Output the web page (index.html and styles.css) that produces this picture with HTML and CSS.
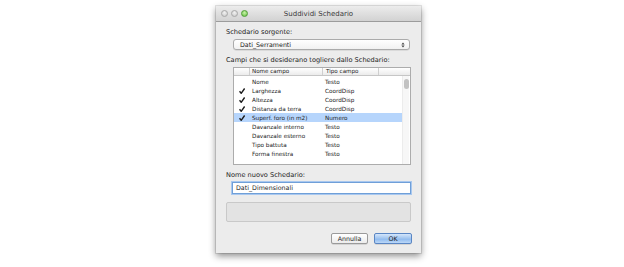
FILE: index.html
```html
<!DOCTYPE html>
<html>
<head>
<meta charset="utf-8">
<link rel="stylesheet" href="styles.css">
</head>
<body>
<div class="stage">
  <div class="window">
    <div class="titlebar">
      <div class="lights">
        <span class="light"></span>
        <span class="light"></span>
        <span class="light green"></span>
      </div>
      <div class="title">Suddividi Schedario</div>
      <div></div>
    </div>
    <div class="content">
      <div class="label">Schedario sorgente:</div>
      <div class="popup">
        <span>Dati_Serramenti</span>
        <svg class="arrows" width="4" height="6" viewBox="0 0 4 6"><path d="M0.4 2.4 L2 0.6 L3.6 2.4Z M0.4 3.6 L2 5.4 L3.6 3.6Z" fill="#444"/></svg>
      </div>
      <div class="label">Campi che si desiderano togliere dallo Schedario:</div>
      <div class="table">
        <div class="thead">
          <div class="th th-check"></div>
          <div class="th th-name">Nome campo</div>
          <div class="th th-type">Tipo campo</div>
          <div class="th th-rest"></div>
        </div>
        <div class="tbody">
          <div class="rows">
            <div class="row"><span class="chk"></span><span class="nm">Nome</span><span class="tp">Testo</span></div>
            <div class="row"><span class="chk"><svg width="6" height="6" viewBox="0 0 6 6"><path d="M0.5 3.3 L2.2 5.3 L5.6 0.5" fill="none" stroke="#1a1a1a" stroke-width="1.4"/></svg></span><span class="nm">Larghezza</span><span class="tp">CoordDisp</span></div>
            <div class="row"><span class="chk"><svg width="6" height="6" viewBox="0 0 6 6"><path d="M0.5 3.3 L2.2 5.3 L5.6 0.5" fill="none" stroke="#1a1a1a" stroke-width="1.4"/></svg></span><span class="nm">Altezza</span><span class="tp">CoordDisp</span></div>
            <div class="row"><span class="chk"><svg width="6" height="6" viewBox="0 0 6 6"><path d="M0.5 3.3 L2.2 5.3 L5.6 0.5" fill="none" stroke="#1a1a1a" stroke-width="1.4"/></svg></span><span class="nm">Distanza da terra</span><span class="tp">CoordDisp</span></div>
            <div class="row selected"><span class="chk"><svg width="6" height="6" viewBox="0 0 6 6"><path d="M0.5 3.3 L2.2 5.3 L5.6 0.5" fill="none" stroke="#1a1a1a" stroke-width="1.4"/></svg></span><span class="nm">Superf. foro (in m2)</span><span class="tp">Numero</span></div>
            <div class="row"><span class="chk"></span><span class="nm">Davanzale interno</span><span class="tp">Testo</span></div>
            <div class="row"><span class="chk"></span><span class="nm">Davanzale esterno</span><span class="tp">Testo</span></div>
            <div class="row"><span class="chk"></span><span class="nm">Tipo battuta</span><span class="tp">Testo</span></div>
            <div class="row"><span class="chk"></span><span class="nm">Forma finestra</span><span class="tp">Testo</span></div>
          </div>
          <div class="scrollbar"><div class="thumb"></div></div>
        </div>
      </div>
      <div class="label">Nome nuovo Schedario:</div>
      <div class="input">Dati_Dimensionali</div>
      <div class="panel"></div>
      <div class="buttons">
        <div class="btn">Annulla</div>
        <div class="btn default">OK</div>
      </div>
    </div>
  </div>
</div>
</body>
</html>
```

FILE: styles.css
```css
html, body {
  margin: 0;
  padding: 0;
  background: #ffffff;
}
body {
  width: 624px;
  height: 267px;
  overflow: hidden;
  font-family: "DejaVu Sans", "Liberation Sans", sans-serif;
  color: #222222;
}
.stage {
  padding: 6px 0 0 216px;
}
.window {
  width: 205px;
  height: 247px;
  background: #ececec;
  box-shadow: 0 3px 7px rgba(0,0,0,0.45), 0 0 0 1px rgba(0,0,0,0.1);
  display: flex;
  flex-direction: column;
}
.titlebar {
  height: 15px;
  border-bottom: 1px solid #9c9c9c;
  background: linear-gradient(#ececec, #d2d2d2);
  display: grid;
  grid-template-columns: 1fr auto 1fr;
  align-items: center;
}
.lights {
  display: flex;
  gap: 3px;
  padding-left: 5px;
}
.light {
  width: 5px;
  height: 5px;
  border-radius: 50%;
  background: radial-gradient(circle at 50% 35%, #f2f2f2, #c6c6c6);
  border: 1px solid #a8a8a8;
}
.light.green {
  background: radial-gradient(circle at 50% 35%, #c9f2a8, #62c040);
  border-color: #519d37;
}
.title {
  font-size: 7px;
  color: #3a3a3a;
  line-height: 10px;
}
.content {
  display: flex;
  flex-direction: column;
  padding: 0 10px;
}
.label {
  font-size: 6.6px;
  line-height: 10px;
  height: 10px;
  margin-top: 5px;
  white-space: nowrap;
}
.popup {
  margin: 2px 1px 0 7px;
  height: 9px;
  border: 1px solid #ababab;
  border-radius: 3px;
  background: linear-gradient(#ffffff, #f2f2f2);
  display: flex;
  align-items: center;
  justify-content: space-between;
  padding: 0 4px 0 6px;
  font-size: 6.3px;
  box-shadow: 0 0.5px 0.5px rgba(0,0,0,0.15);
}
.arrows { display: block; }
.table {
  margin: 2px 0 0 7px;
  height: 96px;
  border: 1px solid #acacac;
  background: #ffffff;
  display: flex;
  flex-direction: column;
}
.thead {
  height: 7px;
  border-bottom: 1px solid #c6c6c6;
  background: linear-gradient(#ffffff, #ebebeb);
  display: flex;
  font-size: 5.6px;
  line-height: 7px;
}
.th {
  border-right: 1px solid #cfcfcf;
  white-space: nowrap;
  overflow: hidden;
}
.th-check { width: 15px; }
.th-name { width: 70px; padding-left: 2px; }
.th-type { width: 52px; padding-left: 3px; }
.th-rest { flex: 1; border-right: none; }
.tbody {
  flex: 1;
  display: flex;
}
.rows {
  flex: 1;
  padding-top: 1px;
  display: flex;
  flex-direction: column;
}
.row {
  height: 9px;
  display: flex;
  align-items: center;
  font-size: 5.7px;
  white-space: nowrap;
}
.row.selected { background: #b6d5fc; }
.chk {
  width: 15px;
  display: flex;
  justify-content: center;
  padding-left: 1px;
  box-sizing: border-box;
}
.chk svg { display: block; }
.nm { width: 73px; padding-left: 3px; box-sizing: border-box; }
.tp { padding-left: 3px; }
.scrollbar {
  width: 7px;
  margin-right: 1px;
  background: #f7f7f7;
  border-left: 1px solid #ececec;
  padding-top: 3px;
  box-sizing: border-box;
}
.thumb {
  width: 5px;
  height: 10px;
  margin-left: 1px;
  border-radius: 3px;
  background: #c2c2c2;
}
.input {
  margin: 2px 0 0 6px;
  height: 10px;
  border: 1px solid #6f9fd8;
  box-shadow: 0 0 0 1px #a9c8ef;
  background: #ffffff;
  font-size: 6.3px;
  line-height: 10px;
  padding-left: 3px;
}
.panel {
  margin-top: 8px;
  height: 18px;
  border: 1px solid #c9c9c9;
  border-radius: 2px;
  background: #e3e3e3;
}
.buttons {
  margin-top: 11px;
  margin-right: -1px;
  display: flex;
  justify-content: flex-end;
  gap: 6px;
}
.btn {
  height: 9px;
  width: 35px;
  border: 1px solid #9a9a9a;
  border-radius: 2px;
  background: linear-gradient(#ffffff, #ececec);
  font-size: 6.3px;
  line-height: 9px;
  text-align: center;
  box-shadow: 0 0.5px 0.5px rgba(0,0,0,0.2);
}
.btn.default {
  width: 36px;
  border-color: #5a86c4;
  background: linear-gradient(#d4e6fb, #9ec3ef 50%, #8ab7ee 51%, #bcd8f8);
}
```
